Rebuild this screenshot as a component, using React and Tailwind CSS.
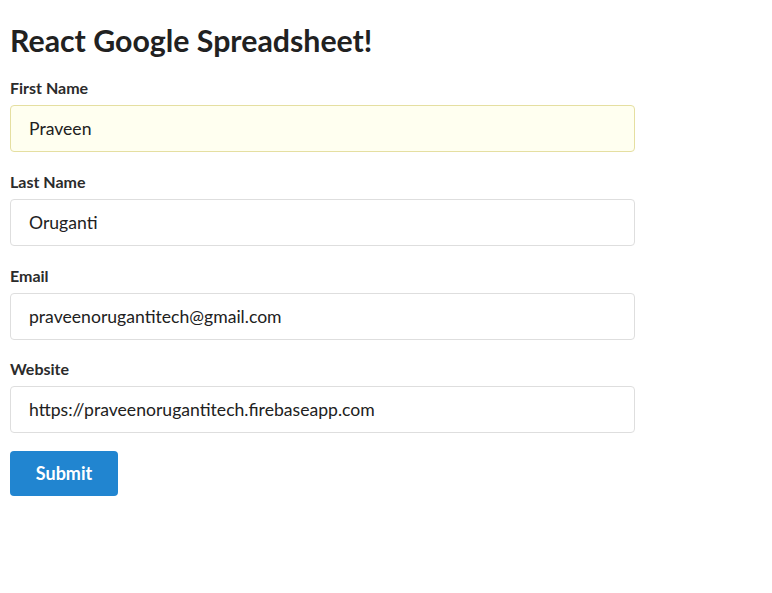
import React, { useState } from "react";

const fields = [
  { name: "firstName", label: "First Name", value: "Praveen" },
  { name: "lastName", label: "Last Name", value: "Oruganti" },
  { name: "email", label: "Email", value: "praveenorugantitech@gmail.com" },
  { name: "website", label: "Website", value: "https://praveenorugantitech.firebaseapp.com" },
];

export default function App() {
  const [values, setValues] = useState(
    Object.fromEntries(fields.map((f) => [f.name, f.value]))
  );

  const handleChange = (e) =>
    setValues({ ...values, [e.target.name]: e.target.value });

  return (
    <div className="min-h-screen bg-white font-['Lato','Helvetica_Neue',Arial,sans-serif] text-[#212121]">
      <div className="w-[625px] ml-[10px] pt-[22px]">
        <h1 className="text-[30.3px] font-bold leading-[36px] mb-[20px]">
          React Google Spreadsheet!
        </h1>
        <form onSubmit={(e) => e.preventDefault()}>
          {fields.map((field, i) => (
            <div key={field.name} className="mb-[19.8px]">
              <label className="block text-[16px] font-bold leading-[20px] mb-[7px] text-[#2b2b2b]">
                {field.label}
              </label>
              <input
                name={field.name}
                value={values[field.name]}
                onChange={handleChange}
                className={
                  i === 0
                    ? "block w-full h-[47px] px-[18px] text-[17.6px] rounded-[4px] border border-[#e5dfa1] bg-[#fffff0] outline-none"
                    : "block w-full h-[47px] px-[18px] text-[17.6px] rounded-[4px] border border-[#dedede] bg-white outline-none"
                }
              />
            </div>
          ))}
          <button
            type="submit"
            className="-mt-[2.4px] w-[108px] h-[45px] rounded-[4px] bg-[#2185d0] text-white text-[18px] font-bold"
          >
            Submit
          </button>
        </form>
      </div>
    </div>
  );
}
